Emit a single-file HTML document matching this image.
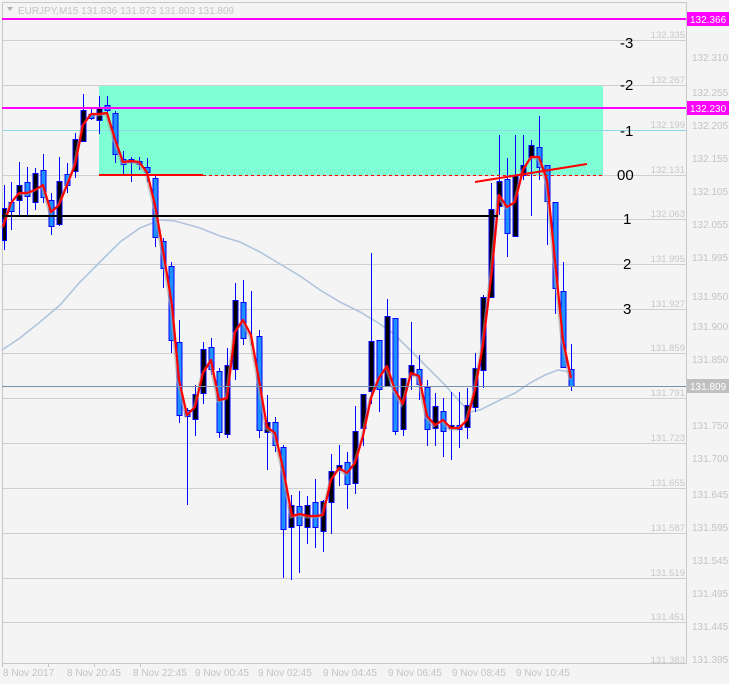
<!DOCTYPE html>
<html><head><meta charset="utf-8"><style>
html,body{margin:0;padding:0;background:#f4f4f4;}
body{width:729px;height:684px;overflow:hidden;font-family:"Liberation Sans",sans-serif;}
svg{display:block}
.g{stroke:#cfcfcf;stroke-width:1}
.w{stroke:#0000ff;stroke-width:1}
.u{fill:#1e90ff;stroke:#0000ff;stroke-width:1}
.b{fill:#000;stroke:#0000ff;stroke-width:1}
.il{font-size:9.5px;fill:#c8c8c8;text-anchor:end}
.al{font-size:10px;fill:#c4c4c4}
.fib{font-size:15px;fill:#000}
.tl{font-size:10px;fill:#c4c4c4}
</style></head><body>
<svg width="729" height="684" viewBox="0 0 729 684" xmlns="http://www.w3.org/2000/svg">
<rect width="729" height="684" fill="#f4f4f4"/>
<!-- zone -->
<rect x="99" y="85" width="504" height="90" fill="#7fffd4"/>
<!-- grid -->
<g class="g">
<line x1="2" y1="40.5" x2="686" y2="40.5"/><line x1="2" y1="85.5" x2="686" y2="85.5"/>
<line x1="2" y1="130.5" x2="686" y2="130.5" stroke="#8fd8e8"/><line x1="2" y1="175.5" x2="686" y2="175.5"/>
<line x1="2" y1="219.5" x2="686" y2="219.5"/><line x1="2" y1="264.5" x2="686" y2="264.5"/>
<line x1="2" y1="309.5" x2="686" y2="309.5"/><line x1="2" y1="353.5" x2="686" y2="353.5"/>
<line x1="2" y1="398.5" x2="686" y2="398.5"/><line x1="2" y1="443.5" x2="686" y2="443.5"/>
<line x1="2" y1="488.5" x2="686" y2="488.5"/><line x1="2" y1="533.5" x2="686" y2="533.5"/>
<line x1="2" y1="578.5" x2="686" y2="578.5"/><line x1="2" y1="622.5" x2="686" y2="622.5"/>
</g>
<rect x="2.5" y="2.5" width="684" height="661" fill="none" stroke="#c8c8c8"/>
<!-- inner labels -->
<g class="il">
<text x="685" y="38">132.335</text><text x="685" y="83">132.267</text><text x="685" y="128">132.199</text>
<text x="685" y="173">132.131</text><text x="685" y="217">132.063</text><text x="685" y="262">131.995</text>
<text x="685" y="307">131.927</text><text x="685" y="351">131.859</text><text x="685" y="396">131.791</text>
<text x="685" y="441">131.723</text><text x="685" y="486">131.655</text><text x="685" y="531">131.587</text>
<text x="685" y="576">131.519</text><text x="685" y="620">131.451</text><text x="685" y="663">131.383</text>
</g>
<!-- axis labels -->
<g class="al">
<text x="692" y="61">132.310</text><text x="692" y="96">132.255</text><text x="692" y="129">132.205</text>
<text x="692" y="162">132.155</text><text x="692" y="195">132.105</text><text x="692" y="228">132.055</text>
<text x="692" y="261">131.995</text><text x="692" y="300">131.950</text><text x="692" y="330">131.900</text>
<text x="692" y="363">131.850</text><text x="692" y="429">131.750</text>
<text x="692" y="462">131.700</text><text x="692" y="498">131.645</text><text x="692" y="531">131.595</text>
<text x="692" y="564">131.545</text><text x="692" y="597">131.495</text><text x="692" y="630">131.445</text>
<text x="692" y="663">131.395</text>
</g>
<!-- time labels -->
<g class="tl">
<line x1="2.5" y1="663" x2="2.5" y2="667" stroke="#c8c8c8"/><line x1="48.5" y1="663" x2="48.5" y2="667" stroke="#c8c8c8"/>
<line x1="94.5" y1="663" x2="94.5" y2="667" stroke="#c8c8c8"/><line x1="140.5" y1="663" x2="140.5" y2="667" stroke="#c8c8c8"/>
<text x="3" y="676">8 Nov 2017</text><text x="67" y="676">8 Nov 20:45</text><text x="133" y="676">8 Nov 22:45</text>
<text x="195" y="676">9 Nov 00:45</text><text x="258" y="676">9 Nov 02:45</text><text x="323" y="676">9 Nov 04:45</text>
<text x="388" y="676">9 Nov 06:45</text><text x="452" y="676">9 Nov 08:45</text><text x="516" y="676">9 Nov 10:45</text>
</g>
<!-- light blue MA -->
<polyline fill="none" stroke="#b0c4de" stroke-width="1.6" points="2,350 20,338 40,322 60,305 80,282 100,262 120,242 140,228 160,220 175,221 200,228 220,236 240,242 260,252 280,264 300,276 320,290 340,302 360,312 380,324 395,335 410,350 425,365 445,385 460,402 470,412 480,410 500,400 515,393 530,383 545,375 558,370 570,372"/>
<!-- candles -->
<g>
<line class="w" x1="4.5" y1="185" x2="4.5" y2="250"/><rect class="b" x="2.5" y="208.5" width="4" height="32"/>
<line class="w" x1="11.5" y1="182" x2="11.5" y2="230"/><rect class="u" x="9" y="202.5" width="5" height="9"/>
<line class="w" x1="19.5" y1="162" x2="19.5" y2="215"/><rect class="b" x="17" y="185.5" width="5" height="15"/>
<line class="w" x1="27.5" y1="167" x2="27.5" y2="215"/><rect class="u" x="25" y="182.5" width="5" height="14"/>
<line class="w" x1="35.5" y1="168" x2="35.5" y2="210"/><rect class="b" x="33" y="173.5" width="5" height="29"/>
<line class="w" x1="43.5" y1="154" x2="43.5" y2="203"/><rect class="u" x="41" y="170.5" width="5" height="27"/>
<line class="w" x1="51.5" y1="193" x2="51.5" y2="235"/><rect class="u" x="49" y="200.5" width="5" height="26"/>
<line class="w" x1="59.5" y1="157" x2="59.5" y2="226"/><rect class="b" x="57" y="181.5" width="5" height="43"/>
<line class="w" x1="67.5" y1="163" x2="67.5" y2="193"/><rect class="u" x="65" y="174.5" width="5" height="11"/>
<line class="w" x1="75.5" y1="133" x2="75.5" y2="178"/><rect class="b" x="73" y="139.5" width="5" height="32"/>
<line class="w" x1="83.5" y1="94" x2="83.5" y2="141"/><rect class="b" x="81" y="110.5" width="5" height="31"/>
<line class="w" x1="91.5" y1="108" x2="91.5" y2="120"/><rect class="u" x="89" y="114.5" width="5" height="4"/>
<line class="w" x1="99.5" y1="96" x2="99.5" y2="134"/><rect class="b" x="97" y="108.5" width="5" height="12"/>
<line class="w" x1="107.5" y1="96" x2="107.5" y2="113"/><rect class="u" x="105" y="105.5" width="5" height="5"/>
<line class="w" x1="115.5" y1="111" x2="115.5" y2="163"/><rect class="u" x="113" y="113.5" width="5" height="41"/>
<line class="w" x1="123.5" y1="151" x2="123.5" y2="175"/><rect class="u" x="121" y="159.5" width="5" height="5"/>
<line class="w" x1="131.5" y1="157" x2="131.5" y2="182"/><rect class="u" x="129" y="159.5" width="5" height="3"/>
<line class="w" x1="139.5" y1="157" x2="139.5" y2="170"/><rect class="u" x="137" y="161.5" width="5" height="3"/>
<line class="w" x1="147.5" y1="158" x2="147.5" y2="182"/><rect class="u" x="145" y="167.5" width="5" height="5"/>
<line class="w" x1="155.5" y1="176" x2="155.5" y2="247"/><rect class="u" x="153" y="178.5" width="5" height="59"/>
<line class="w" x1="163.5" y1="238" x2="163.5" y2="288"/><rect class="u" x="161" y="241.5" width="5" height="27"/>
<line class="w" x1="171.5" y1="262" x2="171.5" y2="353"/><rect class="u" x="169" y="266.5" width="5" height="74"/>
<line class="w" x1="179.5" y1="320" x2="179.5" y2="423"/><rect class="u" x="177" y="342.5" width="5" height="73"/>
<line class="w" x1="187.5" y1="408" x2="187.5" y2="505"/><rect class="u" x="185" y="410.5" width="5" height="6"/>
<line class="w" x1="195.5" y1="385" x2="195.5" y2="436"/><rect class="b" x="193" y="394.5" width="5" height="25"/>
<line class="w" x1="203.5" y1="342" x2="203.5" y2="404"/><rect class="b" x="201" y="349.5" width="5" height="44"/>
<line class="w" x1="211.5" y1="338" x2="211.5" y2="375"/><rect class="u" x="209" y="347.5" width="5" height="22"/>
<line class="w" x1="219.5" y1="368" x2="219.5" y2="438"/><rect class="u" x="217" y="371.5" width="5" height="61"/>
<line class="w" x1="227.5" y1="348" x2="227.5" y2="438"/><rect class="b" x="225" y="365.5" width="5" height="69"/>
<line class="w" x1="235.5" y1="283" x2="235.5" y2="380"/><rect class="b" x="233" y="300.5" width="5" height="69"/>
<line class="w" x1="243.5" y1="280" x2="243.5" y2="345"/><rect class="u" x="241" y="302.5" width="5" height="36"/>
<line class="w" x1="251.5" y1="291" x2="251.5" y2="345"/>
<line class="w" x1="259.5" y1="330" x2="259.5" y2="438"/><rect class="u" x="257" y="336.5" width="5" height="94"/>
<line class="w" x1="267.5" y1="395" x2="267.5" y2="470"/><rect class="b" x="265" y="422.5" width="5" height="10"/>
<line class="w" x1="275.5" y1="417" x2="275.5" y2="452"/><rect class="u" x="273" y="422.5" width="5" height="23"/>
<line class="w" x1="283.5" y1="445" x2="283.5" y2="578"/><rect class="u" x="281" y="447.5" width="5" height="82"/>
<line class="w" x1="291.5" y1="495" x2="291.5" y2="580"/><rect class="b" x="289" y="505.5" width="5" height="22"/>
<line class="w" x1="299.5" y1="491" x2="299.5" y2="573"/><rect class="u" x="297" y="506.5" width="5" height="19"/>
<line class="w" x1="307.5" y1="496" x2="307.5" y2="544"/><rect class="b" x="305" y="505.5" width="5" height="22"/>
<line class="w" x1="315.5" y1="479" x2="315.5" y2="548"/><rect class="u" x="313" y="502.5" width="5" height="25"/>
<line class="w" x1="323.5" y1="500" x2="323.5" y2="552"/><rect class="b" x="321" y="501.5" width="5" height="30"/>
<line class="w" x1="331.5" y1="454" x2="331.5" y2="534"/><rect class="b" x="329" y="471.5" width="5" height="31"/>
<line class="w" x1="339.5" y1="445" x2="339.5" y2="486"/><rect class="b" x="337" y="465.5" width="5" height="5"/>
<line class="w" x1="347.5" y1="452" x2="347.5" y2="509"/><rect class="u" x="345" y="462.5" width="5" height="22"/>
<line class="w" x1="355.5" y1="406" x2="355.5" y2="494"/><rect class="b" x="353" y="431.5" width="5" height="52"/>
<line class="w" x1="363.5" y1="394" x2="363.5" y2="446"/><rect class="b" x="361" y="394.5" width="5" height="34"/>
<line class="w" x1="371.5" y1="253" x2="371.5" y2="404"/><rect class="b" x="369" y="341.5" width="5" height="50"/>
<line class="w" x1="379.5" y1="340" x2="379.5" y2="412"/><rect class="u" x="377" y="340.5" width="5" height="49"/>
<line class="w" x1="387.5" y1="299" x2="387.5" y2="386"/><rect class="b" x="385" y="316.5" width="5" height="70"/>
<line class="w" x1="395.5" y1="318" x2="395.5" y2="435"/><rect class="u" x="393" y="318.5" width="5" height="113"/>
<line class="w" x1="403.5" y1="378" x2="403.5" y2="436"/><rect class="b" x="401" y="378.5" width="5" height="51"/>
<line class="w" x1="411.5" y1="322" x2="411.5" y2="390"/><rect class="b" x="409" y="365.5" width="5" height="10"/>
<line class="w" x1="419.5" y1="355" x2="419.5" y2="400"/><rect class="u" x="417" y="369.5" width="5" height="15"/>
<line class="w" x1="427.5" y1="380" x2="427.5" y2="446"/><rect class="u" x="425" y="387.5" width="5" height="42"/>
<line class="w" x1="435.5" y1="393" x2="435.5" y2="446"/><rect class="b" x="433" y="406.5" width="5" height="22"/>
<line class="w" x1="443.5" y1="398" x2="443.5" y2="457"/><rect class="u" x="441" y="411.5" width="5" height="20"/>
<line class="w" x1="451.5" y1="392" x2="451.5" y2="460"/><rect class="b" x="449" y="425.5" width="5" height="3"/>
<line class="w" x1="459.5" y1="392" x2="459.5" y2="448"/><rect class="u" x="457" y="425.5" width="5" height="4"/>
<line class="w" x1="467.5" y1="388" x2="467.5" y2="439"/><rect class="b" x="465" y="405.5" width="5" height="22"/>
<line class="w" x1="475.5" y1="353" x2="475.5" y2="412"/><rect class="b" x="473" y="368.5" width="5" height="39"/>
<line class="w" x1="483.5" y1="295" x2="483.5" y2="388"/><rect class="b" x="481" y="297.5" width="5" height="73"/>
<line class="w" x1="491.5" y1="183" x2="491.5" y2="297"/><rect class="b" x="489" y="209.5" width="5" height="88"/>
<line class="w" x1="499.5" y1="135" x2="499.5" y2="215"/><rect class="b" x="497" y="181.5" width="5" height="25"/>
<line class="w" x1="507.5" y1="158" x2="507.5" y2="257"/><rect class="u" x="505" y="179.5" width="5" height="54"/>
<line class="w" x1="515.5" y1="135" x2="515.5" y2="236"/><rect class="b" x="513" y="175.5" width="5" height="61"/>
<line class="w" x1="523.5" y1="135" x2="523.5" y2="180"/><rect class="b" x="521" y="165.5" width="5" height="10"/>
<line class="w" x1="531.5" y1="140" x2="531.5" y2="216"/><rect class="b" x="529" y="145.5" width="5" height="12"/>
<line class="w" x1="539.5" y1="116" x2="539.5" y2="180"/><rect class="u" x="537" y="147.5" width="5" height="20"/>
<line class="w" x1="547.5" y1="165" x2="547.5" y2="245"/><rect class="u" x="545" y="165.5" width="5" height="36"/>
<line class="w" x1="555.5" y1="202" x2="555.5" y2="314"/><rect class="u" x="553" y="202.5" width="5" height="86"/>
<line class="w" x1="563.5" y1="262" x2="563.5" y2="367"/><rect class="u" x="561" y="291.5" width="5" height="76"/>
<line class="w" x1="571.5" y1="344" x2="571.5" y2="391"/><rect class="u" x="569" y="369.5" width="5" height="17"/>
</g>
<!-- red MA -->
<polyline fill="none" stroke="#a0a0a0" stroke-width="2" opacity="0.6" transform="translate(-1.5,1.5)" points="3,227 11,203 19,193 27,193 35,190 43,185 51,212 59,205 67,185 75,165 83,125 91,114 99,114 107,113 115,139 123,162 131,161 139,162 147,172 155,205 163,250 172,305 179,380 187,415 195,407 203,373 211,360 219,400 227,398 235,332 243,320 251,335 259,380 267,427 275,433 283,468 292,516 300,514 308,516 316,516 323,515 331,480 339,468 347,473 355,463 363,436 371,398 379,378 387,366 395,390 403,404 411,373 419,376 427,416 435,425 443,420 451,428 459,428 467,420 475,390 483,345 492,270 499,195 507,207 515,202 523,170 531,157 539,157 547,180 555,260 563,340 571,378"/>
<polyline fill="none" stroke="#ff0000" stroke-width="2.2" stroke-linejoin="round" points="3,227 11,203 19,193 27,193 35,190 43,185 51,212 59,205 67,185 75,165 83,125 91,114 99,114 107,113 115,139 123,162 131,161 139,162 147,172 155,205 163,250 172,305 179,380 187,415 195,407 203,373 211,360 219,400 227,398 235,332 243,320 251,335 259,380 267,427 275,433 283,468 292,516 300,514 308,516 316,516 323,515 331,480 339,468 347,473 355,463 363,436 371,398 379,378 387,366 395,390 403,404 411,373 419,376 427,416 435,425 443,420 451,428 459,428 467,420 475,390 483,345 492,270 499,195 507,207 515,202 523,170 531,157 539,157 547,180 555,260 563,340 571,378"/>
<!-- lines -->
<line x1="2" y1="19" x2="686" y2="19" stroke="#ff00ff" stroke-width="2"/>
<line x1="2" y1="108" x2="686" y2="108" stroke="#ff00ff" stroke-width="2"/>
<line x1="99" y1="175" x2="203" y2="175" stroke="#ff0000" stroke-width="2"/>
<line x1="203" y1="175.5" x2="603" y2="175.5" stroke="#ff0000" stroke-width="1" stroke-dasharray="3,3"/>
<line x1="2" y1="216" x2="498" y2="216" stroke="#000" stroke-width="2"/>
<line x1="475" y1="182" x2="587" y2="164" stroke="#ff0000" stroke-width="2"/>
<line x1="2" y1="386.5" x2="686" y2="386.5" stroke="#7890a8" stroke-width="1"/>
<!-- fib labels -->
<g class="fib">
<text x="620" y="48">-3</text><text x="620" y="90">-2</text><text x="620" y="136">-1</text>
<text x="617" y="180">00</text><text x="623" y="224">1</text><text x="623" y="269">2</text><text x="623" y="314">3</text>
</g>
<!-- price boxes -->
<rect x="687" y="12" width="42" height="14" fill="#ff00ff"/><text x="690" y="23" font-size="10" fill="#fff">132.366</text>
<rect x="687" y="101" width="42" height="14" fill="#ff00ff"/><text x="690" y="112" font-size="10" fill="#fff">132.230</text>
<rect x="687" y="379" width="42" height="14" fill="#c0c0c0"/><text x="690" y="390" font-size="10" fill="#fff">131.809</text>
<!-- header -->
<path d="M7,7 L13,7 L10,11 Z" fill="#b0b0b0"/>
<text x="18" y="14" font-size="10" fill="#c4c4c4">EURJPY,M15  131.836 131.873 131.803 131.809</text>
</svg>
</body></html>
